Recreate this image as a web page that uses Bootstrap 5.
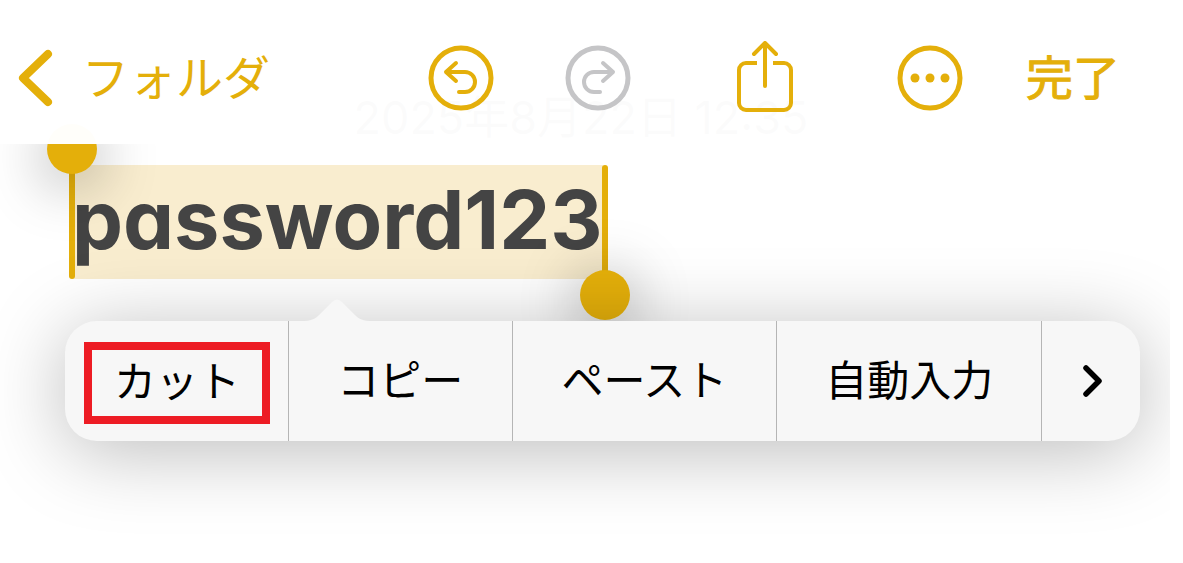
<!DOCTYPE html>
<html lang="ja">
<head>
<meta charset="utf-8">
<meta name="viewport" content="width=device-width, initial-scale=1">
<title>メモ</title>
<link href="https://cdn.jsdelivr.net/npm/bootstrap@5.3.0/dist/css/bootstrap.min.css" rel="stylesheet">
<style>
  :root { --accent: #e4af0a; }
  body { background: #fff; font-family: Inter, "Noto Sans CJK JP", sans-serif; }
  .screen { margin-right: 13px; min-height: 100vh; }
  .topbar { height: 144px; padding: 12px 50px 0 18px; background: rgba(255, 255, 255, .98); z-index: 3; }
  .topbar .btn, .edit-menu .btn { border: 0; border-radius: 0; padding: 0; }
  .topbar .btn { color: var(--accent); font-size: 47px; line-height: 66px; }
  .topbar .btn:disabled { color: #c5c5c7; opacity: 1; }
  .topbar svg { display: block; }
  .back-btn { gap: 28px; }
  .history { gap: 71px; margin-right: 101px; }
  .actions { gap: 99px; margin-right: 63px; }
  .topbar .done-btn { -webkit-text-stroke: 1px currentColor; }
  .note { padding: 85px 0 0 72px; }
  .note-date { margin: 0 72px 14px 0; padding-right: 8px; font-size: 45px; line-height: 66px; color: #48484c; }
  .note-title { font-size: 81px; font-weight: 700; line-height: 110px; color: #444; font-feature-settings: "cv11"; }
  .selected { background: #f9edcf; padding-bottom: 4px; }
  .handle { position: absolute; top: 0; bottom: 0; width: 6px; border-radius: 3px; background: var(--accent); }
  .handle::after { content: ""; position: absolute; left: -22px; width: 50px; height: 50px; border-radius: 50%; background: var(--accent); box-shadow: 0 8px 60px rgba(0, 0, 0, .42); }
  .handle-start { left: -3px; }
  .handle-start::after { top: -41px; }
  .handle-end { right: -5px; }
  .handle-end::after { bottom: -41px; }
  .edit-menu { margin: 42px 30px 0 65px; height: 120px; border-radius: 32px; background: #f7f7f7; box-shadow: 0 10px 80px rgba(0, 0, 0, .27); z-index: 2; }
  .edit-menu .btn { color: #000; font-size: 42px; line-height: 62px; flex: 223 1 0; }
  .edit-menu .btn + .btn { border-left: 1px solid #b5b5b5; }
  .edit-menu .wide { flex-grow: 264; }
  .edit-menu .more { flex: 0 0 99px; padding-left: 4px; }
  .callout-mark { margin: 4px 18px 0 19px; padding-bottom: 2px; height: 82px; border: 8px solid #ed1c24; }
  .menu-tip { position: absolute; left: 236px; top: -23px; }
</style>
</head>
<body>
<div class="screen position-relative overflow-hidden">
  <header class="topbar position-absolute top-0 start-0 end-0 d-flex align-items-center">
    <button type="button" class="btn back-btn d-flex align-items-center me-auto">
      <svg width="36" height="58" viewBox="0 0 36 58" fill="none" stroke="currentColor" stroke-width="8" stroke-linecap="round" stroke-linejoin="round" aria-hidden="true"><path d="M30 5 5 29 30 53"/></svg>
      <span>フォルダ</span>
    </button>
    <div class="history d-flex">
      <button type="button" class="btn" aria-label="取り消す">
        <svg width="66" height="66" viewBox="0 0 66 66" fill="none" stroke="currentColor" stroke-width="4" stroke-linecap="round" stroke-linejoin="round"><circle cx="33" cy="33" r="30" stroke-width="5"/><path d="M28 18 18 27l10 9M18 27h19a10 10 0 0 1 0 20h-6"/></svg>
      </button>
      <button type="button" class="btn" aria-label="やり直す" disabled>
        <svg width="66" height="66" viewBox="0 0 66 66" fill="none" stroke="currentColor" stroke-width="4" stroke-linecap="round" stroke-linejoin="round"><circle cx="33" cy="33" r="30" stroke-width="5"/><path d="M38 18l10 9-10 9M48 27H29a10 10 0 0 0 0 20h6"/></svg>
      </button>
    </div>
    <div class="actions d-flex align-items-center">
      <button type="button" class="btn" aria-label="共有">
        <svg width="66" height="74" viewBox="0 0 66 74" fill="none" stroke="currentColor" stroke-width="4" stroke-linecap="round" stroke-linejoin="round"><path stroke-linecap="butt" d="M25 22H14a7 7 0 0 0-7 7v33a7 7 0 0 0 7 7h38a7 7 0 0 0 7-7V29a7 7 0 0 0-7-7H41"/><path d="M33 45V2M22 13 33 2l11 11"/></svg>
      </button>
      <button type="button" class="btn" aria-label="その他">
        <svg width="66" height="66" viewBox="0 0 66 66" fill="currentColor"><circle cx="33" cy="33" r="30" fill="none" stroke="currentColor" stroke-width="5"/><circle cx="18" cy="33" r="4.5"/><circle cx="33" cy="33" r="4.5"/><circle cx="48" cy="33" r="4.5"/></svg>
      </button>
    </div>
    <button type="button" class="btn done-btn">完了</button>
  </header>

  <main class="note">
    <p class="note-date text-center">2025年8月22日 12:35</p>
    <h1 class="note-title m-0"><span class="selected position-relative d-inline-block">password123<i class="handle handle-start"></i><i class="handle handle-end"></i></span></h1>
  </main>

  <div class="edit-menu position-relative d-flex align-items-stretch" role="toolbar" aria-label="編集">
    <svg class="menu-tip" width="72" height="24" viewBox="0 0 72 24" fill="#f7f7f7" aria-hidden="true"><path d="M0 24v-1C10 23 14 21 18 17L31 4Q36-1 41 4l13 13c4 4 8 6 18 6v1z"/></svg>
    <button type="button" class="btn d-flex flex-column justify-content-center align-items-stretch"><span class="callout-mark d-flex align-items-center justify-content-center">カット</span></button>
    <button type="button" class="btn">コピー</button>
    <button type="button" class="btn wide">ペースト</button>
    <button type="button" class="btn wide">自動入力</button>
    <button type="button" class="btn more d-flex align-items-center justify-content-center" aria-label="次へ">
      <svg width="20" height="34" viewBox="0 0 20 34" fill="none" stroke="currentColor" stroke-width="5.5" stroke-linecap="round" stroke-linejoin="round"><path d="M3 4 16 17 3 30"/></svg>
    </button>
  </div>
</div>
<script src="https://cdn.jsdelivr.net/npm/bootstrap@5.3.0/dist/js/bootstrap.bundle.min.js"></script>
</body>
</html>
